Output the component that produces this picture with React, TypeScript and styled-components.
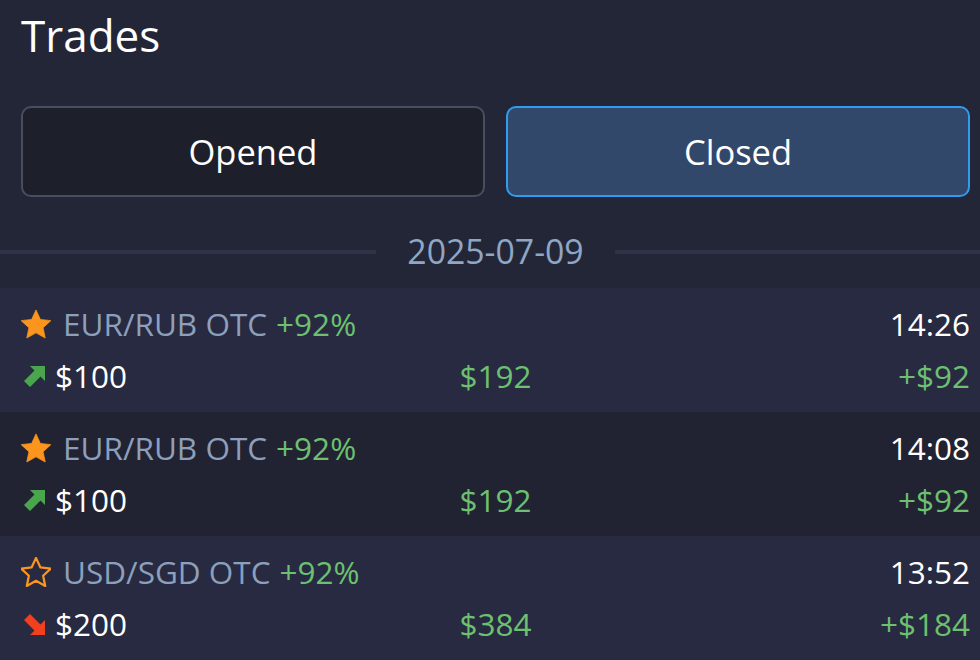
import React from "react";
import styled, { createGlobalStyle } from "styled-components";

const GlobalStyle = createGlobalStyle`
  html, body {
    margin: 0;
    padding: 0;
    background: #232637;
  }
  body {
    font-family: "Open Sans", "Noto Sans", sans-serif;
    -webkit-font-smoothing: antialiased;
  }
`;

const Page = styled.div`
  width: 980px;
  height: 660px;
  overflow: hidden;
  background: #232637;
  color: #fff;
`;

const Header = styled.div`
  padding: 0 10px 0 21px;
`;

const Title = styled.h1`
  margin: -3px 0 0;
  font-size: 44px;
  font-weight: 400;
  line-height: 76px;
`;

const Tabs = styled.div`
  display: grid;
  grid-template-columns: 1fr 1fr;
  column-gap: 21px;
  margin-top: 33px;
`;

const Tab = styled.button<{ $active?: boolean }>`
  height: 91px;
  border-radius: 10px;
  font-family: inherit;
  font-size: 34.5px;
  color: #fff;
  cursor: pointer;
  background: ${(p) => (p.$active ? "#32486a" : "#1d1f2b")};
  border: 2px solid ${(p) => (p.$active ? "#2f9cf0" : "#4a4e5c")};
`;

const DateRow = styled.div`
  display: grid;
  grid-template-columns: 1fr auto 1fr;
  align-items: center;
  column-gap: 31px;
  height: 91px;
  box-sizing: border-box;
  padding: 18px 10px 0 21px;
`;

const DateLine = styled.div<{ $side: "left" | "right" }>`
  height: 4px;
  background: #2f3347;
  margin-left: ${(p) => (p.$side === "left" ? "-21px" : "0")};
  margin-right: ${(p) => (p.$side === "right" ? "-10px" : "0")};
`;

const DateText = styled.span`
  font-size: 33.8px;
  color: #8fa6c4;
  line-height: 1;
`;

const TradeRow = styled.div<{ $dark?: boolean }>`
  background: ${(p) => (p.$dark ? "#212333" : "#272a40")};
  padding: 10px 10px 10px 21px;
  display: grid;
  grid-template-columns: 1fr auto 1fr;
  grid-auto-rows: 52px;
  align-items: center;
  font-size: 31.5px;
  line-height: 52px;
`;

const Cell = styled.div<{ $align?: "left" | "center" | "right"; $span?: boolean }>`
  display: flex;
  align-items: center;
  justify-content: ${(p) =>
    p.$align === "right" ? "flex-end" : p.$align === "center" ? "center" : "flex-start"};
  grid-column: ${(p) => (p.$span ? "1 / 3" : "auto")};
  white-space: nowrap;
`;

const Pair = styled.span`
  color: #8c9fbb;
  margin-left: 12px;
`;

const Percent = styled.span`
  color: #6cc06f;
  margin-left: 9px;
`;

const Amount = styled.span`
  color: #fff;
  margin-left: 10px;
`;

const Green = styled.span`
  color: #6cc06f;
`;

const White = styled.span`
  color: #fff;
`;

const Star = ({ filled }: { filled: boolean }) => (
  <svg width="30" height="30" viewBox="2 1.6 20 20" style={{ flex: "none" }}>
    <path
      d="M12 2.2l2.95 6.35 6.95.8-5.15 4.75 1.4 6.85L12 17.5l-6.15 3.45 1.4-6.85L2.1 9.35l6.95-.8z"
      fill={filled ? "#fb951d" : "none"}
      stroke="#fb951d"
      strokeWidth={filled ? 0.5 : 1.5}
      strokeLinejoin="round"
    />
  </svg>
);

const Arrow = ({ up }: { up: boolean }) => (
  <svg width="21" height="21" viewBox="0 0 21 21" style={{ flex: "none", marginLeft: 3 }}>
    {up ? (
      <path d="M6 0H21V15L16.5 10.5L6 21L0 15L10.5 4.5Z" fill="#4aa64c" />
    ) : (
      <path d="M6 21H21V6L16.5 10.5L6 0L0 6L10.5 16.5Z" fill="#f2401e" />
    )}
  </svg>
);

type Trade = {
  pair: string;
  percent: string;
  time: string;
  amount: string;
  payout: string;
  profit: string;
  favorite: boolean;
  up: boolean;
};

const trades: Trade[] = [
  { pair: "EUR/RUB OTC", percent: "+92%", time: "14:26", amount: "$100", payout: "$192", profit: "+$92", favorite: true, up: true },
  { pair: "EUR/RUB OTC", percent: "+92%", time: "14:08", amount: "$100", payout: "$192", profit: "+$92", favorite: true, up: true },
  { pair: "USD/SGD OTC", percent: "+92%", time: "13:52", amount: "$200", payout: "$384", profit: "+$184", favorite: false, up: false },
];

export default function App() {
  return (
    <Page>
      <GlobalStyle />
      <Header>
        <Title>Trades</Title>
        <Tabs>
          <Tab>Opened</Tab>
          <Tab $active>Closed</Tab>
        </Tabs>
      </Header>
      <DateRow>
        <DateLine $side="left" />
        <DateText>2025-07-09</DateText>
        <DateLine $side="right" />
      </DateRow>
      {trades.map((t, i) => (
        <TradeRow key={i} $dark={i % 2 === 1}>
          <Cell $span>
            <Star filled={t.favorite} />
            <Pair>{t.pair}</Pair>
            <Percent>{t.percent}</Percent>
          </Cell>
          <Cell $align="right">
            <White>{t.time}</White>
          </Cell>
          <Cell>
            <Arrow up={t.up} />
            <Amount>{t.amount}</Amount>
          </Cell>
          <Cell $align="center">
            <Green>{t.payout}</Green>
          </Cell>
          <Cell $align="right">
            <Green>{t.profit}</Green>
          </Cell>
        </TradeRow>
      ))}
    </Page>
  );
}
